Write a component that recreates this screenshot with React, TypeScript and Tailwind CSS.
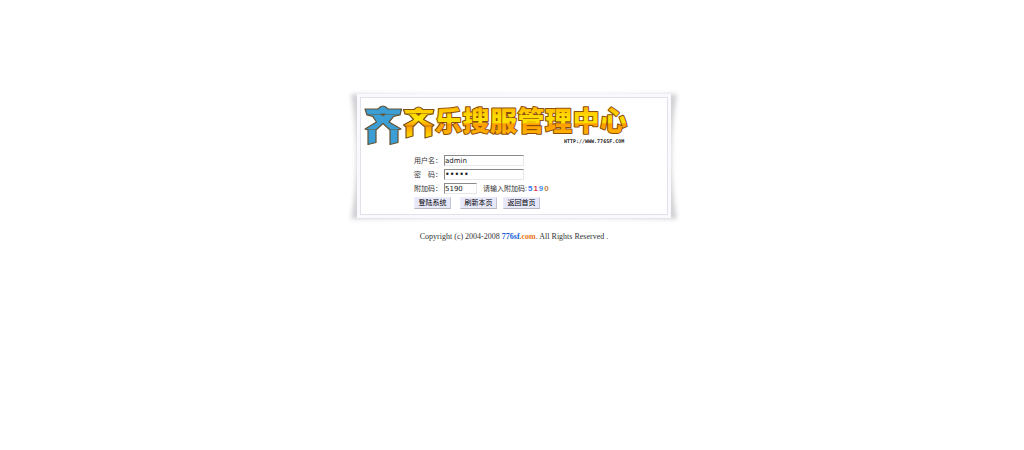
import { useState } from "react";
import type { ReactNode } from "react";

const cjk = "font-['Liberation_Sans','Noto_Sans_CJK_SC',sans-serif]";

const labelClass = "w-[30px] shrink-0 whitespace-pre";
const inputClass =
  "h-[11px] border border-[#e8e8e8] border-t-[#8a8a8a] border-l-[#8a8a8a] bg-white font-['DejaVu_Sans',sans-serif] leading-[9px] text-[#222] outline-none";
const buttonClass =
  "h-3 w-[37px] border border-[#ededfb] border-r-[#c2c2d0] border-b-[#b5b5c3] bg-[#e8e8fb] text-center text-[7px] leading-[10px] whitespace-nowrap text-black";

function Field({ id, label, children }: { id: string; label: string; children: ReactNode }) {
  return (
    <div className="flex h-[11px] items-center">
      <label htmlFor={id} className={labelClass}>
        {label}
      </label>
      {children}
    </div>
  );
}

/* Shadow that is wide at the corners and narrow along the middle of each side */
function CurledShadow() {
  return (
    <svg
      aria-hidden="true"
      viewBox="0 0 334 144"
      preserveAspectRatio="none"
      className="absolute -inset-2.5 h-[calc(100%+20px)] w-[calc(100%+20px)]"
    >
      <defs>
        <filter id="soften" x="-5%" y="-10%" width="110%" height="120%">
          <feGaussianBlur stdDeviation="2" />
        </filter>
      </defs>
      <path
        d="M4 10Q167 13 330 10Q319 75 330 135Q167 132 4 135Q15 75 4 10Z"
        fill="#6d6870"
        fillOpacity="0.3"
        filter="url(#soften)"
      />
    </svg>
  );
}

function Logo() {
  const title = ["乐", "搜", "服", "管", "理", "中", "心"];
  return (
    <svg
      viewBox="0 -3 266 48"
      className="block h-12 w-[266px] overflow-visible font-['Noto_Sans_CJK_SC',sans-serif] font-black"
      role="img"
      aria-label="齐齐乐搜服管理中心"
    >
      <defs>
        <linearGradient id="gold" gradientUnits="userSpaceOnUse" x1="0" y1="2" x2="0" y2="30">
          <stop offset="0" stopColor="#ffb400" />
          <stop offset="0.3" stopColor="#ffd800" />
          <stop offset="0.56" stopColor="#ffe000" />
          <stop offset="0.6" stopColor="#ff9d00" />
          <stop offset="1" stopColor="#ffb400" />
        </linearGradient>
        <linearGradient id="sun" x1="0" y1="0" x2="0" y2="1">
          <stop offset="0" stopColor="#ffc400" />
          <stop offset="0.4" stopColor="#ffe600" />
          <stop offset="0.54" stopColor="#ffb000" />
          <stop offset="0.6" stopColor="#ff9d00" />
          <stop offset="1" stopColor="#ffe000" />
        </linearGradient>
      </defs>
      {/* Emblem: two figures with arms spread */}
      <g strokeWidth="1.2" strokeLinejoin="round">
        <g fill="#3b9fd6" stroke="#665231">
          <path d="M1 4H14Q19 -2 24 4H37.500L36 10L29.700 11.300L25 17L37 24L34 25V37.500L26 39.500V25L19 18.500L12 25V37.500L4 39.500V25L1 24L12.500 17L8.700 11.300L3 10Z" />
          <path d="M16.500 9H21.500L19 11Z" fill="#77603b" strokeWidth="0.8" />
          <path d="M3 9.500H35M2 24.500H12M26 24.500H36" fill="none" strokeWidth="0.5" />
        </g>
        <g fill="url(#sun)" stroke="#805218">
          <path d="M39.500 4.500H50Q54.500 -0.500 59 4.500H70L69 9L63.500 10L59.500 14.500L70 20L68 22V31L61 33V22L54.500 16.500L49 22V31L42 33V22L39.500 20L49.500 14.500L45.500 10L41 9Z" />
          <path d="M52 8.500H57L54.500 10.500Z" fill="#86540f" strokeWidth="0.8" />
          <path d="M41 8.500H69M41 21H49M61 21H69" fill="none" strokeWidth="0.5" />
        </g>
      </g>
      <g fontSize="27" fill="url(#gold)" stroke="#8b4d0b" strokeWidth="2" strokeLinejoin="round" paintOrder="stroke">
        {title.map((char, i) => (
          <text key={char} x={71 + i * 27.5} y="26">
            {char}
          </text>
        ))}
      </g>
      <text
        x="200"
        y="38"
        fontSize="5"
        fill="#222"
        className="font-['DejaVu_Sans_Mono',monospace] font-bold"
      >
        HTTP://WWW.776SF.COM
      </text>
    </svg>
  );
}

export default function App() {
  const [user, setUser] = useState("admin");
  const [password, setPassword] = useState("admin");
  const [code, setCode] = useState("5190");

  return (
    <div className={`flex min-h-screen flex-col items-center bg-white pt-[94px] pl-1 text-[7px] leading-[11px] text-[#333] ${cjk}`}>
      <main className="relative w-full max-w-[314px]">
        <CurledShadow />
        <div className="relative bg-[#fafafe] p-[3px]">
          <div className="border border-[#e2e2ea] bg-white px-[3px] pt-1 pb-[5px]">
            <Logo />
            <form
              className="mt-[5px] ml-[50px] flex flex-col gap-[3px]"
              onSubmit={(e) => e.preventDefault()}
            >
              <Field id="user" label="用户名：">
                <input
                  id="user"
                  className={`${inputClass} w-20 text-[7px]`}
                  value={user}
                  onChange={(e) => setUser(e.target.value)}
                />
              </Field>
              <Field id="password" label="密　码：">
                <input
                  id="password"
                  type="password"
                  className={`${inputClass} w-20 text-[8px]`}
                  value={password}
                  onChange={(e) => setPassword(e.target.value)}
                />
              </Field>
              <Field id="code" label="附加码：">
                <input
                  id="code"
                  className={`${inputClass} w-[33px] text-[7px]`}
                  value={code}
                  onChange={(e) => setCode(e.target.value)}
                />
                <span className="ml-1.5 whitespace-nowrap">请输入附加码:</span>
                <span className="ml-px flex gap-px font-['Liberation_Sans',sans-serif] text-[8px] font-bold">
                  <span className="text-[#3978ee]">5</span>
                  <span className="text-[#d94050]">1</span>
                  <span className="text-[#4789e8]">9</span>
                  <span className="text-[#c28345]">0</span>
                </span>
              </Field>
              <div className="flex">
                <button type="submit" className={`${buttonClass} mr-[9px]`}>
                  登陆系统
                </button>
                <button type="button" className={`${buttonClass} mr-1.5`}>
                  刷新本页
                </button>
                <button type="button" className={buttonClass}>
                  返回首页
                </button>
              </div>
            </form>
          </div>
        </div>
      </main>
      <footer className="mt-[13px] font-['Liberation_Serif',serif] text-[8px] whitespace-nowrap">
        Copyright (c) 2004-2008{" "}
        <a href="#home" className="font-bold">
          <span className="text-[#1760d8]">776sf</span>
          <span className="text-[#e87516]">.com</span>
        </a>
        . All Rights Reserved .
      </footer>
    </div>
  );
}
